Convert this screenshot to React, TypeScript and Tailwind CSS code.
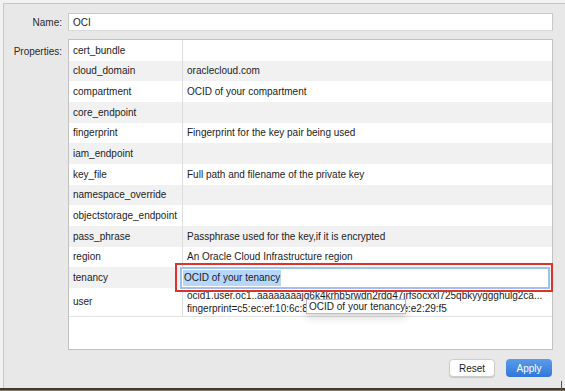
import React from "react";

const rows: [string, string][] = [
  ["cert_bundle", ""],
  ["cloud_domain", "oraclecloud.com"],
  ["compartment", "OCID of your compartment"],
  ["core_endpoint", ""],
  ["fingerprint", "Fingerprint for the key pair being used"],
  ["iam_endpoint", ""],
  ["key_file", "Full path and filename of the private key"],
  ["namespace_override", ""],
  ["objectstorage_endpoint", ""],
  ["pass_phrase", "Passphrase used for the key,if it is encrypted"],
  ["region", "An Oracle Cloud Infrastructure region"],
  ["tenancy", ""],
];

export default function App() {
  return (
    <div
      className="relative w-[565px] h-[391px] overflow-hidden bg-[#f2f2f2] flex flex-col text-[10px] text-[#1c1c1c]"
      style={{ fontFamily: '"Liberation Sans", Arial, sans-serif' }}
    >
      <div className="mt-[3px] ml-[3px] h-[385px] flex flex-col border-t border-l border-[#c6c6c6] bg-[#e8e8e8] pr-[12px] pt-[9px]">
        <div className="flex items-center h-[18px]">
          <div className="w-[58px] text-right text-[#2a2a2a]">Name:</div>
          <div className="ml-[6px] flex-1 h-[18px] bg-white border border-[#c9c9c9] border-b-[#d9d9d9] flex items-center pl-[4px]">
            OCI
          </div>
        </div>
        <div className="flex mt-[8px]">
          <div className="w-[58px] text-right text-[#2a2a2a] pt-[5px]">Properties:</div>
          <div className="ml-[6px] flex-1 h-[311px] bg-white border border-[#c2c2c2] flex flex-col">
            {rows.map(([k, v], i) => (
              <div
                key={k}
                className={`flex h-[20.67px] items-center ${i % 2 === 1 ? "bg-[#f1f1f1]" : "bg-white"}`}
              >
                <div className="w-[114px] h-full flex items-center pl-[4px] border-r border-[#dedede] whitespace-nowrap">
                  {k}
                </div>
                <div className="flex-1 pl-[4px] whitespace-nowrap">{v}</div>
              </div>
            ))}
            <div className="flex h-[29px] bg-white border-b border-[#e2e2e2]">
              <div className="w-[114px] h-full flex items-center pl-[4px] border-r border-[#dedede]">user</div>
              <div className="flex-1 min-w-0 pl-[4px] flex flex-col justify-center leading-[13px]">
                <div className="whitespace-nowrap overflow-hidden text-ellipsis pr-[8px]">
                  ocid1.user.oc1..aaaaaaaajq6k4krhb5rwdn2rdq47irfsocxxl725qbkyyggghulg2ca...
                </div>
                <div className="whitespace-nowrap overflow-hidden">
                  fingerprint=c5:ec:ef:10:6c:8a:4b:7d:21:9f:03:be:6e:e2:29:f5
                </div>
              </div>
            </div>
          </div>
        </div>
        <div className="flex justify-end gap-[11px] mt-[9px]">
          <button className="w-[46px] h-[18px] bg-white border border-[#cdcdcd] rounded-[4px] shadow-[0_1px_1px_rgba(0,0,0,0.15)] text-[10px] text-[#1e1e1e]">
            Reset
          </button>
          <button className="w-[46px] h-[18px] rounded-[4px] bg-gradient-to-b from-[#5b9bea] to-[#3177d6] text-white text-[10px] mr-[1px]">
            Apply
          </button>
        </div>
      </div>
      <div className="h-[2px] bg-[#3b3b3b]" />
      <div className="flex-1 bg-[#8a7866]" />

      {/* selection / editor overlay */}
      <div className="absolute left-[175px] top-[263px] w-[378px] h-[29px] border-2 border-[#e0322c]" />
      <div className="absolute left-[180px] top-[267px] w-[370px] h-[22px] border-2 border-[#9dc2ef] bg-white flex items-center pl-[1px]">
        <span className="bg-[#b6d6fb] leading-[16px] px-[1px]">OCID of your tenancy</span>
      </div>
      {/* tooltip */}
      <div className="absolute left-[306px] top-[299px] w-[100px] h-[15px] bg-white border border-[#bdbdbd] shadow-[0_3px_8px_rgba(0,0,0,0.18)] flex items-center pl-[2px] whitespace-nowrap">
        OCID of your tenancy
      </div>
      {/* resize corner */}
      <div className="absolute left-[561px] top-[381px] w-px h-[10px] bg-[#555]" />
    </div>
  );
}
